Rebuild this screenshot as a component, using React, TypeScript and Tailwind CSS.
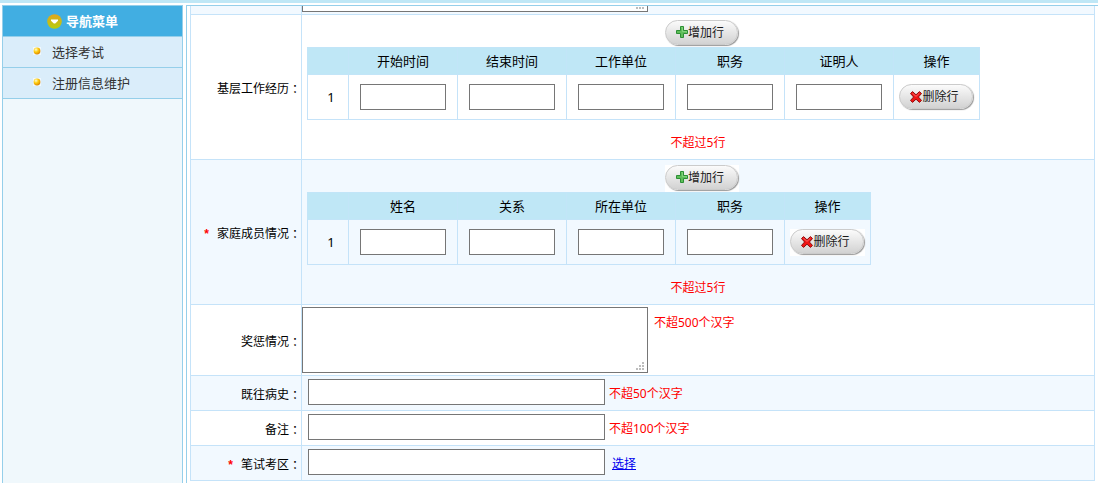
import { useState } from 'react';
import type { ReactNode } from 'react';

const NAV_ITEMS = ['选择考试', '注册信息维护'];
const WORK_COLUMNS = ['开始时间', '结束时间', '工作单位', '职务', '证明人'];
const FAMILY_COLUMNS = ['姓名', '关系', '所在单位', '职务'];
const MAX_ROWS = 5;

function NavArrowIcon() {
  return (
    <svg className="size-[15px]" viewBox="0 0 15 15" aria-hidden="true">
      <defs>
        <linearGradient id="navArrow" x1="0" y1="0" x2="0" y2="1">
          <stop offset="0" stopColor="#e0a51c" />
          <stop offset="1" stopColor="#b5cf10" />
        </linearGradient>
      </defs>
      <circle cx="7.5" cy="7.5" r="7.3" fill="url(#navArrow)" />
      <path d="M4 5.5h7v1.2L8.2 9.6H6.8L4 6.7z" fill="#fff" />
    </svg>
  );
}

function Bullet() {
  return (
    <svg className="mb-[3px] size-[8px]" viewBox="0 0 8 8" aria-hidden="true">
      <defs>
        <radialGradient id="bullet" cx="0.35" cy="0.3" r="0.75">
          <stop offset="0" stopColor="#fffbd0" />
          <stop offset="0.45" stopColor="#ffcf10" />
          <stop offset="1" stopColor="#d98200" />
        </radialGradient>
      </defs>
      <rect width="8" height="8" fill="#fff" opacity="0.6" />
      <circle cx="4" cy="4" r="3.4" fill="url(#bullet)" />
    </svg>
  );
}

function PlusIcon() {
  return (
    <svg className="mb-[2px] size-[12px]" viewBox="0 0 12 12" aria-hidden="true">
      <path d="M4.5.5h3v4h4v3h-4v4h-3v-4h-4v-3h4z" fill="#5fbf5a" stroke="#2c8f35" />
      <path d="M5.5 1.5h1v4h4v1" fill="none" stroke="#9adf92" opacity="0.6" />
    </svg>
  );
}

function CrossIcon() {
  return (
    <svg className="size-[12px]" viewBox="0 0 12 12" aria-hidden="true">
      <path
        d="M2.5.6 6 3.8 9.5.6l2 2L8.4 6l3.1 3.4-2 2L6 8.2l-3.5 3.2-2-2L3.6 6 .5 2.6z"
        fill="#f01414"
        stroke="#8e0c0c"
      />
      <path d="M2.4 2.2 6 5.4l3.4-3.2" fill="none" stroke="#ff9a9a" opacity="0.6" />
    </svg>
  );
}

interface PillButtonProps {
  icon: ReactNode;
  children: ReactNode;
  onClick?: () => void;
}

function PillButton({ icon, children, onClick }: PillButtonProps) {
  return (
    <button type="button" onClick={onClick} className="block cursor-pointer bg-white pr-px pb-[2px]">
      <span className="flex h-[25px] items-center rounded-full border border-[#cbcbcb] bg-linear-to-b from-[#fbfbfb] to-[#d2d2d2] pt-px pr-[13px] pl-[10px] text-[12px] text-[#1a1a1a] shadow-[1px_1px_1px_#9a9a9a]">
        {icon}
        {children}
      </span>
    </button>
  );
}

interface FormRowProps {
  label: string;
  htmlFor?: string;
  required?: boolean;
  shaded?: boolean;
  children: ReactNode;
}

function FormRow({ label, htmlFor, required, shaded, children }: FormRowProps) {
  return (
    <div className={`flex border-b border-[#c5e3f9] ${shaded ? 'bg-[#f2f9ff]' : 'bg-white'}`}>
      <label
        htmlFor={htmlFor}
        className="flex w-[111px] shrink-0 items-center justify-end border-r border-[#c5e3f9] pt-[3px]"
      >
        {required && (
          <span className="mr-2 font-['Liberation_Sans',sans-serif] font-bold text-[#f00]">*</span>
        )}
        {label}
        <span className="font-['Noto_Sans_CJK_TC',sans-serif]">：</span>
      </label>
      <div className="min-w-0 flex-1">{children}</div>
    </div>
  );
}

function TextArea({ id, label }: { id: string; label?: string }) {
  return (
    <div className="relative py-[2px]">
      <textarea
        id={id}
        aria-label={label}
        className="block h-[66px] w-[346px] resize-none border border-[#767676] bg-white p-1 outline-none"
      />
      <svg className="absolute right-[4px] bottom-[5px] size-[8px]" viewBox="0 0 8 8" fill="#bdbdbd" aria-hidden="true">
        <path d="M6 0h2v2H6zM3 3h2v2H3zM6 3h2v2H6zM0 6h2v2H0zM3 6h2v2H3zM6 6h2v2H6z" />
      </svg>
    </div>
  );
}

function RecordTable({ name, columns }: { name: string; columns: string[] }) {
  const [rows, setRows] = useState([1]);

  function addRow() {
    if (rows.length < MAX_ROWS) setRows([...rows, Math.max(0, ...rows) + 1]);
  }

  return (
    <div className="pt-[5px] pb-[7px]">
      <div className="flex justify-center pl-2">
        <PillButton icon={<PlusIcon />} onClick={addRow}>增加行</PillButton>
      </div>
      <table className="ml-[5px] table-fixed border-collapse text-[13px]">
        <thead>
          <tr className="h-[27px] bg-[#bfe7f6]">
            <th className="w-[41px] border border-[#c2e5f8]" />
            {columns.map((column) => (
              <th key={column} className="w-[109px] border border-[#c2e5f8] font-normal">{column}</th>
            ))}
            <th className="w-[86px] border border-[#c2e5f8] font-normal">操作</th>
          </tr>
        </thead>
        <tbody>
          {rows.map((row, i) => (
            <tr key={row} className="h-[45px]">
              <td className="border border-[#c5e3f9] pl-[6px] text-center">{i + 1}</td>
              {columns.map((column) => (
                <td key={column} className="border border-[#c5e3f9]">
                  <input
                    type="text"
                    aria-label={`${name} ${column} ${i + 1}`}
                    className="mx-auto block h-[26px] w-[86px] border border-[#767676] bg-white px-1 outline-none"
                  />
                </td>
              ))}
              <td className="border border-[#c5e3f9]">
                <div className="flex justify-center">
                  <PillButton icon={<CrossIcon />} onClick={() => setRows(rows.filter((r) => r !== row))}>
                    删除行
                  </PillButton>
                </div>
              </td>
            </tr>
          ))}
        </tbody>
      </table>
      <p className="pt-[14px] text-center leading-[18px] text-[#f00]">不超过5行</p>
    </div>
  );
}

function InputLine({ id, children }: { id: string; children: ReactNode }) {
  return (
    <div className="flex h-[34px] items-start pt-[3px] pl-[6px] leading-[30px]">
      <input
        id={id}
        type="text"
        className="h-[26px] w-[297px] border border-[#767676] bg-white px-1 outline-none"
      />
      {children}
    </div>
  );
}

export default function App() {
  return (
    <div className="flex h-screen flex-col overflow-hidden bg-white font-['Noto_Sans','Noto_Sans_CJK_SC',sans-serif] text-[12px] leading-[18px] text-black">
      <div className="mb-[2px] h-[3px] shrink-0 bg-[#bfe7f6]" />
      <div className="flex min-h-0 flex-1 gap-[3px] pl-[2px]">
        <nav className="w-[181px] shrink-0 border-x border-t border-[#95cfea] bg-[#f0f8fc] text-[13px]">
          <h2 className="flex h-[31px] items-center justify-center gap-1 border-b border-[#95cfea] bg-[#41aee2] pr-[20px] font-bold text-white">
            <NavArrowIcon />
            导航菜单
          </h2>
          <ul>
            {NAV_ITEMS.map((item) => (
              <li key={item} className="border-b border-[#95cfea] bg-[#daedfa]">
                <a href="#" className="flex h-[30px] items-center gap-[11px] pl-[30px] text-[#333]">
                  <Bullet />
                  {item}
                </a>
              </li>
            ))}
          </ul>
        </nav>

        <main className="min-w-0 flex-1 overflow-hidden border-t border-l border-[#95cfea] px-[3px]">
          <form className="border-x border-[#c5e3f9]">
            {/* tail of the previous field, mostly scrolled out of view */}
            <div className="flex h-[9px] items-end overflow-hidden border-b border-[#c5e3f9] bg-[#f2f9ff]">
              <div className="h-[8px] w-[111px] shrink-0 border-r border-[#c5e3f9]" />
              <TextArea id="previous" label="简历" />
            </div>

            <FormRow label="基层工作经历">
              <RecordTable name="基层工作经历" columns={WORK_COLUMNS} />
            </FormRow>
            <FormRow label="家庭成员情况" required shaded>
              <RecordTable name="家庭成员情况" columns={FAMILY_COLUMNS} />
            </FormRow>
            <FormRow label="奖惩情况" htmlFor="awards">
              <div className="flex gap-[6px]">
                <TextArea id="awards" />
                <span className="pt-[9px] text-[#f00]">不超500个汉字</span>
              </div>
            </FormRow>
            <FormRow label="既往病史" htmlFor="medical" shaded>
              <InputLine id="medical">
                <span className="ml-1 text-[#f00]">不超50个汉字</span>
              </InputLine>
            </FormRow>
            <FormRow label="备注" htmlFor="remark">
              <InputLine id="remark">
                <span className="ml-1 text-[#f00]">不超100个汉字</span>
              </InputLine>
            </FormRow>
            <FormRow label="笔试考区" htmlFor="area" required shaded>
              <InputLine id="area">
                <a href="#" className="ml-[7px] text-[#00e] underline">选择</a>
              </InputLine>
            </FormRow>
          </form>
        </main>
      </div>
    </div>
  );
}
